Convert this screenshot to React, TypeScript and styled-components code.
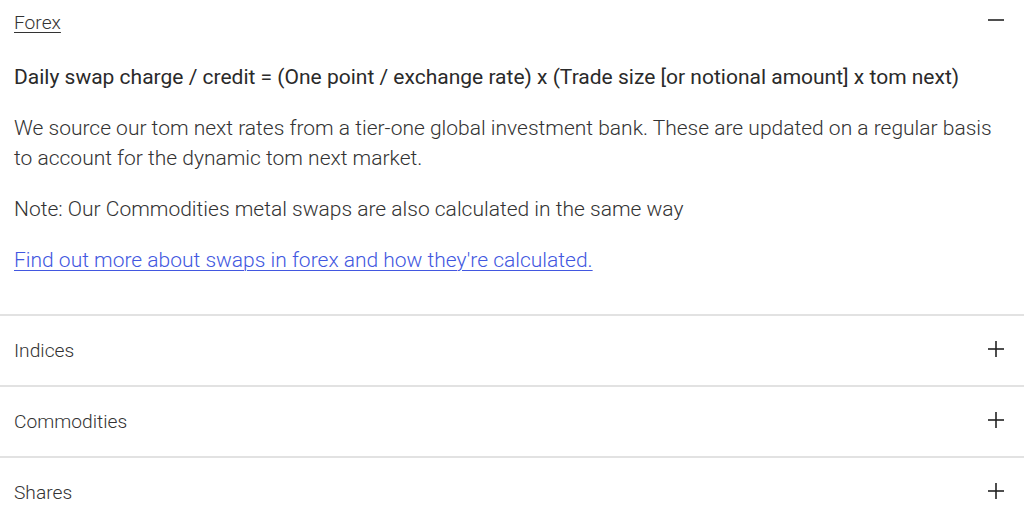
import React, { useState } from "react";
import styled, { createGlobalStyle } from "styled-components";

const Global = createGlobalStyle`
  html, body { margin: 0; padding: 0; background: #fff; }
  body { font-family: Roboto, "Noto Sans", Arial, sans-serif; -webkit-font-smoothing: antialiased; }
`;

const Accordion = styled.div`
  display: flex;
  flex-direction: column;
  width: 1024px;
`;

const Item = styled.section<{ $last?: boolean }>`
  border-bottom: ${(p) => (p.$last ? "none" : "2px solid #e2e2e2")};
`;

const Header = styled.button<{ $open: boolean }>`
  display: flex;
  align-items: center;
  justify-content: space-between;
  width: 100%;
  height: ${(p) => (p.$open ? "44px" : "69px")};
  padding: 0 20px 0 14px;
  border: 0;
  background: transparent;
  cursor: pointer;
  font-family: Roboto, Arial, sans-serif;
  font-size: 19.2px;
  font-weight: 300;
  color: #333;
  text-align: left;
`;

const Title = styled.span<{ $open: boolean }>`
  text-decoration: ${(p) => (p.$open ? "underline" : "none")};
  text-underline-offset: 3px;
  text-decoration-thickness: 1px;
`;

const Icon = styled.svg`
  width: 16px;
  height: 16px;
  flex: none;
  margin-bottom: 4px;
`;

const Body = styled.div`
  padding: 18px 14px 39px 14px;
  display: flex;
  flex-direction: column;
  gap: 21px;
`;

const Formula = styled.p`
  margin: 0;
  font-size: 21px;
  line-height: 30px;
  font-weight: 400;
  color: #2a2a2a;
`;

const Para = styled.p`
  margin: 0;
  font-size: 21px;
  line-height: 30px;
  font-weight: 300;
  color: #333;
`;

const Link = styled.a`
  font-size: 21px;
  line-height: 30px;
  font-weight: 300;
  color: #4257e0;
  text-decoration: underline;
  text-underline-offset: 3px;
  text-decoration-thickness: 1px;
  align-self: flex-start;
`;

const PlusMinus = ({ open }: { open: boolean }) => (
  <Icon viewBox="0 0 16 16" fill="none" stroke="#222" strokeWidth={1.6}>
    <line x1="0" y1="8" x2="16" y2="8" />
    {!open && <line x1="8" y1="0" x2="8" y2="16" />}
  </Icon>
);

const items = ["Forex", "Indices", "Commodities", "Shares"];

export default function App() {
  const [open, setOpen] = useState<string | null>("Forex");
  return (
    <>
      <Global />
      <Accordion>
        {items.map((name, i) => {
          const isOpen = open === name;
          return (
            <Item key={name} $last={i === items.length - 1}>
              <Header $open={isOpen} onClick={() => setOpen(isOpen ? null : name)}>
                <Title $open={isOpen}>{name}</Title>
                <PlusMinus open={isOpen} />
              </Header>
              {isOpen && name === "Forex" && (
                <Body>
                  <Formula>
                    Daily swap charge / credit = (One point / exchange rate) x (Trade size [or notional amount] x tom next)
                  </Formula>
                  <Para>
                    We source our tom next rates from a tier-one global investment bank. These are updated on a regular basis to account for the dynamic tom next market.
                  </Para>
                  <Para>Note: Our Commodities metal swaps are also calculated in the same way</Para>
                  <Link href="#">Find out more about swaps in forex and how they're calculated.</Link>
                </Body>
              )}
            </Item>
          );
        })}
      </Accordion>
    </>
  );
}
